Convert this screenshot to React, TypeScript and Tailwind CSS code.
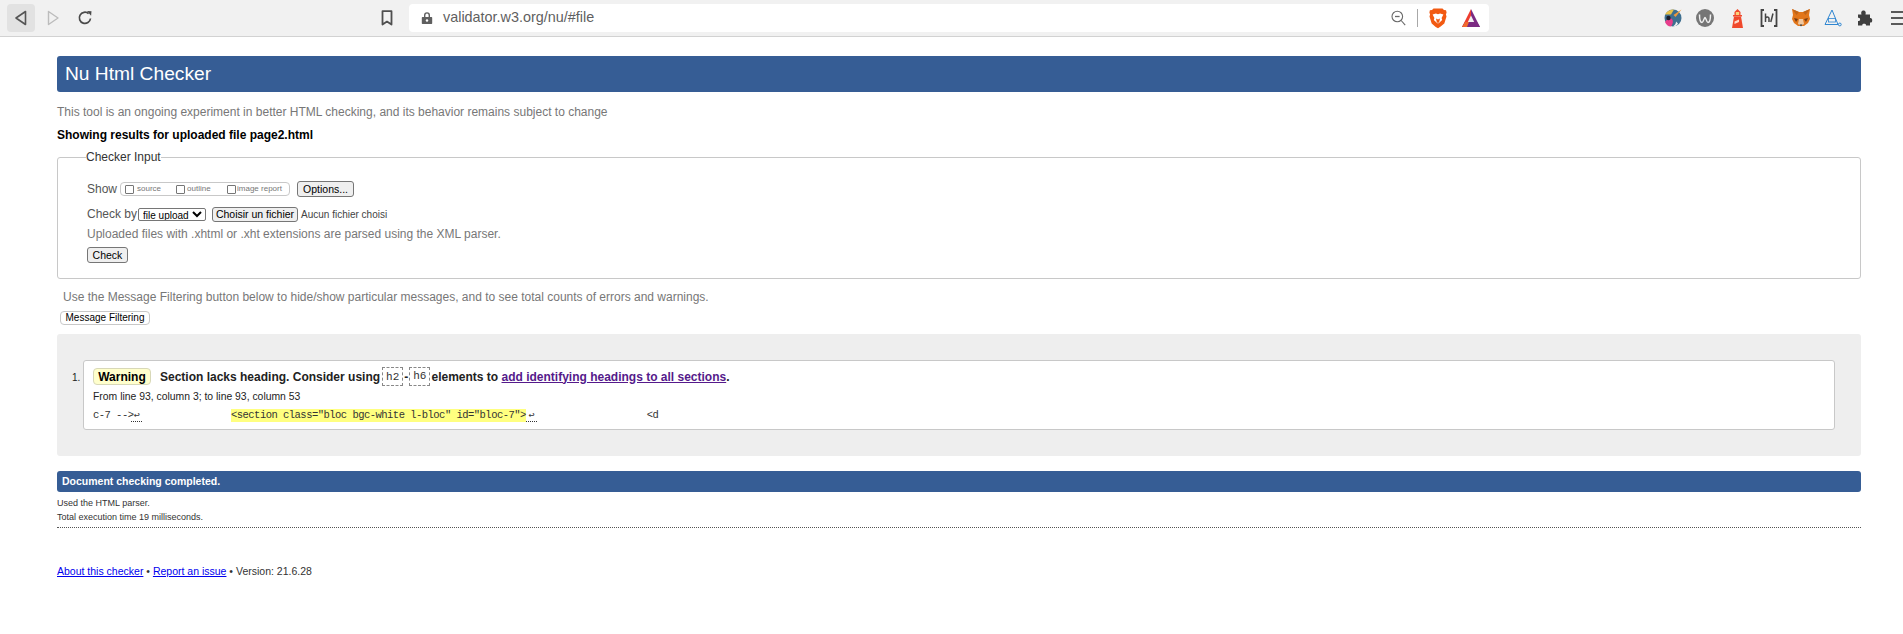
import React from 'react'

const sans = "font-['Liberation_Sans',Arial,sans-serif]"

function BackIcon({ color }: { color: string }) {
    return (
        <svg width="14" height="16" viewBox="0 0 14 16" fill="none" stroke={color} strokeWidth="1.6" strokeLinejoin="round">
            <path d="M11.5 1.5v13L2 8z" />
        </svg>
    )
}

function ForwardIcon() {
    return (
        <svg width="14" height="16" viewBox="0 0 14 16" fill="none" stroke="#bcbcbc" strokeWidth="1.4" strokeLinejoin="round">
            <path d="M2.5 1.5v13L12 8z" />
        </svg>
    )
}

function ReloadIcon() {
    return (
        <svg width="16" height="16" viewBox="0 0 16 16" fill="none" stroke="#4a4a4a" strokeWidth="1.7">
            <path d="M13.5 8.5A5.6 5.6 0 1 1 11.6 3.6" />
            <path d="M10 1l4.5.3-.4 4.5z" fill="#4a4a4a" stroke="none" />
        </svg>
    )
}

function BookmarkIcon() {
    return (
        <svg width="12" height="16" viewBox="0 0 12 16" fill="none" stroke="#4f4f4f" strokeWidth="1.8" strokeLinejoin="round">
            <path d="M1.5 1.2h9v13.4L6 11.6l-4.500 3z" />
        </svg>
    )
}

function LockIcon() {
    return (
        <svg width="12" height="14" viewBox="0 0 12 14" fill="#5f5f5f">
            <path d="M3 6V4.200a3 3 0 0 1 6 0V6H7.600V4.200a1.600 1.600 0 0 0-3.200 0V6z" />
            <path d="M1.500 6h9a.7.7 0 0 1 .7.7v5.600a.7.7 0 0 1-.7.7h-9a.7.7 0 0 1-.7-.7V6.700a.7.7 0 0 1 .7-.7z" />
            <circle cx="6" cy="9.500" r="1.200" fill="#fff" />
        </svg>
    )
}

function ZoomOutIcon() {
    return (
        <svg width="15" height="16" viewBox="0 0 15 16" fill="none" stroke="#6a6a6a" strokeWidth="1.1">
            <circle cx="6.300" cy="6.500" r="5.300" />
            <path d="M10.200 10.500l4 4.600" />
            <path d="M4 6.500h4.600" strokeWidth="1.300" />
        </svg>
    )
}

function BraveIcon() {
    return (
        <svg width="18" height="21" viewBox="0 0 18 21">
            <path d="M4.500.5h9L15 2l2 .2.6 2.200-.7 2 .6 2-2.200 7-4 3.400L9 20.300l-2.300-1.400-4-3.400-2.200-7 .6-2-.7-2L.9 2.200 3 2z" fill="#f25a12" />
            <path d="M3.600 6.500l3.300-.9 2.100.6 2.100-.6 3.300.9-1.800 3.500.6 2-3.500 3.300H8.300l-3.500-3.300.6-2z" fill="#fff" />
            <path d="M7 10.500l2 1 2-1-.8 3.700-1.200.8-1.200-.8z" fill="#f25a12" />
        </svg>
    )
}

function BatIcon() {
    return (
        <svg width="18" height="18" viewBox="0 0 18 18">
            <path d="M9 0L0 18h5L9 9.500 9 0z" fill="#ee3d2f" />
            <path d="M9 0l9 18h-4.500L9 9.500z" fill="#7b2a82" />
            <path d="M0 18l3-5h12l3 5z" fill="#7b2a82" />
            <path d="M3 13h4l-2 5H0z" fill="#f26a2e" />
            <path d="M9 6.500l3.200 6.500H5.800z" fill="#f1f1f1" />
        </svg>
    )
}

function ColorWheelIcon() {
    return (
        <svg width="18" height="18" viewBox="0 0 18 18">
            <circle cx="9" cy="9" r="8.500" fill="#3f6f8f" />
            <path d="M1 5.500C3 2 6 .5 10 .5L7 5.500z" fill="#e9c24a" />
            <path d="M17.500 .5l-6 7.500-2-2z" fill="#f09a3a" />
            <path d="M1 13c2-3 5-5 7-3 1.500 1.500 1 5-1 7.500C4 17.500 2 15.500 1 13z" fill="#e83e8c" />
            <circle cx="4.500" cy="9" r="2.200" fill="#1d1d2b" />
            <path d="M9 17.500c2-1.500 3-3 3-5l2 2c-1 2-3 3-5 3z" fill="#f2f2f2" />
        </svg>
    )
}

function WIcon() {
    return (
        <svg width="18" height="18" viewBox="0 0 18 18">
            <circle cx="9" cy="9" r="9" fill="#767676" />
            <path d="M3.500 5.500c0 5 1 8 2.500 8s2-5 3-5 1.500 5 3 5 2.500-3 2.500-8" fill="none" stroke="#f1f1f1" strokeWidth="1.500" />
        </svg>
    )
}

function LighthouseIcon() {
    return (
        <svg width="13" height="19" viewBox="0 0 13 19">
            <path d="M6.500 0l3 3v3h-6V3z" fill="#f0492c" />
            <rect x="4.800" y="3" width="3.400" height="3" fill="#fbd27a" />
            <rect x="2" y="6" width="9" height="1.500" fill="#f0492c" />
            <path d="M3 7.500h7l2 11.500H1z" fill="#f0492c" />
            <path d="M3.500 12.500l4.500-2v2.500l-4.500 2z" fill="#ffd9c9" />
        </svg>
    )
}

function HnIcon() {
    return (
        <svg width="18" height="18" viewBox="0 0 18 18" fill="none" stroke="#444" strokeWidth="1.500">
            <path d="M4 1H1.500v16H4M14 1h2.500v16H14" strokeWidth="1.800" />
            <path d="M5.500 4.500v8.500M5.500 9c1-1.500 3.500-1.500 3.500.5V13" />
            <path d="M13 4.500L10.800 13" />
        </svg>
    )
}

function FoxIcon() {
    return (
        <svg width="18" height="18" viewBox="0 0 18 18">
            <path d="M0 0l7 3h4l7-3-1 6 1 4-2 4-4 3H6l-4-3-2-4 1-4z" fill="#e2761b" />
            <path d="M2 9l4 1-2 3zM16 9l-4 1 2 3z" fill="#763d16" />
            <path d="M7 10h4l1 5-3 2-3-2z" fill="#f0c8a0" />
            <path d="M7.500 15.500h3L9 17.500z" fill="#2f2f2f" />
            <path d="M0 0l7 3-2.500 3zM18 0l-7 3 2.500 3z" fill="#c0651a" />
        </svg>
    )
}

function TriangleIcon() {
    return (
        <svg width="18" height="18" viewBox="0 0 18 18" fill="none" stroke="#2f86d1" strokeWidth="1">
            <path d="M8 1L1 15.500h13z" />
            <circle cx="15.800" cy="15.500" r="1.400" />
            <rect x="4.500" y="9.500" width="7" height="3.500" strokeWidth=".8" />
        </svg>
    )
}

function PuzzleIcon() {
    return (
        <svg width="16" height="16" viewBox="0 0 16 16" fill="#3f3f3f">
            <path d="M1 4.500h3.500c-.8-3 .5-4 2-4s2.800 1 2 4H13V8c3-.8 3 5.500 0 4.500V15.500H9c.8-2.500-4.500-2.500-3.700 0H1V11c2.800.8 2.800-4 0-3.200z" />
        </svg>
    )
}

function MenuIcon() {
    return (
        <svg width="12" height="14" viewBox="0 0 12 14" fill="#5a5a5a">
            <rect y="0" width="12" height="2" />
            <rect y="6" width="12" height="2" />
            <rect y="12" width="12" height="2" />
        </svg>
    )
}

function ExtSlot({ children }: { children: React.ReactNode }) {
    return <div className="flex h-5 w-8 items-center justify-center">{children}</div>
}

function Toolbar() {
    return (
        <div className="flex h-[37px] items-center border-b border-[#d2d2d2] bg-[#f1f1f1]">
            <div className="ml-[7px] flex h-7 w-7 items-center justify-center rounded bg-[#e2e2e2]"><BackIcon color="#555" /></div>
            <div className="ml-[11px] flex w-[14px] justify-center"><ForwardIcon /></div>
            <div className="ml-[17px] flex w-4 justify-center"><ReloadIcon /></div>
            <div className="ml-[288px] flex w-3 justify-center"><BookmarkIcon /></div>
            <div className="ml-4 flex h-7 w-[1080px] items-center rounded bg-white pl-3 pr-[9px]">
                <LockIcon />
                <span className="ml-[10px] text-[14.4px] text-[#5f5f5f]">validator.w3.org/nu/#file</span>
                <div className="ml-auto flex items-center">
                    <ZoomOutIcon />
                    <div className="ml-[11px] h-[18px] w-px bg-[#a8a8a8]" />
                    <div className="ml-[11px] flex"><BraveIcon /></div>
                    <div className="ml-[15px] flex"><BatIcon /></div>
                </div>
            </div>
            <div className="ml-auto flex -mr-[10px]">
                <ExtSlot><ColorWheelIcon /></ExtSlot>
                <ExtSlot><WIcon /></ExtSlot>
                <ExtSlot><LighthouseIcon /></ExtSlot>
                <ExtSlot><HnIcon /></ExtSlot>
                <ExtSlot><FoxIcon /></ExtSlot>
                <ExtSlot><TriangleIcon /></ExtSlot>
                <ExtSlot><PuzzleIcon /></ExtSlot>
                <ExtSlot><MenuIcon /></ExtSlot>
            </div>
        </div>
    )
}

const nativeButton = "rounded-[3px] border border-[#767676] bg-[#efefef] text-[10.5px] leading-none text-black"
const checkbox = "m-0 h-[9px] w-[9px] appearance-none rounded-[1px] border border-[#767676] bg-white"

function CheckerInput() {
    return (
        <fieldset className="mt-2 h-[129px] rounded-[3px] border border-[#c8c8c8] pl-[29px] pr-4">
            <legend className="-ml-px px-0 text-[12px] leading-[14px] text-[#333]">Checker Input</legend>

            <div className="mt-[17px] flex h-4 items-center">
                <span className="text-[12px] text-[#555]">Show</span>
                <div className="ml-[3px] flex h-[14px] w-[170px] items-center rounded-[4px] border border-[#c8c8c8] pl-[4px] text-[8px] text-[#777]">
                    <input type="checkbox" className={checkbox} />
                    <span className="ml-[3px] w-[39px]">source</span>
                    <input type="checkbox" className={checkbox} />
                    <span className="ml-[2px] w-[40px]">outline</span>
                    <input type="checkbox" className={checkbox} />
                    <span className="ml-[1px]">image report</span>
                </div>
                <button className={`ml-[7px] h-4 w-[57px] ${nativeButton}`}>Options...</button>
            </div>

            <div className="mt-[9px] flex h-4 items-center">
                <span className="text-[12px] text-[#555]">Check by</span>
                <select className="ml-px h-[13px] w-[68px] rounded-[2px] border border-[#767676] bg-white text-[10px] leading-none text-black">
                    <option>file upload</option>
                </select>
                <button className={`ml-[6px] h-[15px] w-[86px] ${nativeButton}`}>Choisir un fichier</button>
                <span className="ml-[3px] text-[10px] font-normal text-[#444]">Aucun fichier choisi</span>
            </div>

            <p className="mt-[4px] text-[12px] leading-4 text-[#777]">Uploaded files with .xhtml or .xht extensions are parsed using the XML parser.</p>

            <button className={`mt-[5px] block h-4 w-[41px] ${nativeButton}`}>Check</button>
        </fieldset>
    )
}

function Code({ children }: { children: React.ReactNode }) {
    return (
        <code className="mx-px inline-flex h-[19px] items-center border border-dashed border-[#888] px-[3px] font-['Liberation_Mono',monospace] text-[11px] font-normal text-[#333]">
            {children}
        </code>
    )
}

function ReturnMark() {
    return <span className="w-[11px] border-b border-dotted border-[#333] text-center text-[10px] leading-[11px]">↩</span>
}

function Message() {
    return (
        <div className="mt-[26px] h-[70px] rounded-[3px] border border-[#c8c8c8] bg-white pl-[9px]">
            <div className="mt-[6px] flex h-[19px] items-center text-[12px] font-bold text-[#222]">
                <span className="flex h-[17px] w-[58px] items-center justify-center rounded-[4px] border border-[#d8d8b8] bg-[#ffffcc] text-[12px] font-bold text-black">Warning</span>
                <span className="ml-[9px]">Section lacks heading. Consider using</span>
                <span className="ml-px"><Code>h2</Code></span>
                <span>-</span>
                <Code>h6</Code>
                <span>elements to&nbsp;</span>
                <a href="#" className="text-[#551a8b] underline">add identifying headings to all sections</a>
                <span>.</span>
            </div>
            <p className="mt-[5px] text-[10.4px] leading-3 text-[#222]">From line 93, column 3; to line 93, column 53</p>
            <div className="mt-[6px] flex h-[13px] items-center whitespace-pre font-['Liberation_Mono',monospace] text-[10.5px] tracking-[-0.52px] text-[#333]">
                <span className="w-[38px]">c-7 --&gt;</span>
                <ReturnMark />
                <span className="ml-[89px] bg-[#ffff80] leading-[13px]">&lt;section class="bloc bgc-white l-bloc" id="bloc-7"&gt;</span>
                <ReturnMark />
                <span className="ml-[110px]">&lt;d</span>
            </div>
        </div>
    )
}

export default function App() {
    return (
        <div className={`h-[634px] overflow-hidden bg-white ${sans}`}>
            <Toolbar />
            <div className="mx-[57px] mt-[19px] mr-[42px]">
                <h1 className="flex h-9 items-center rounded-[3px] bg-[#365d95] pl-2 text-[19.2px] font-normal text-white">Nu Html Checker</h1>
                <p className="mt-[13px] text-[12px] leading-[14px] text-[#777]">This tool is an ongoing experiment in better HTML checking, and its behavior remains subject to change</p>
                <p className="mt-[9px] text-[12px] font-bold leading-[14px] text-black">Showing results for uploaded file page2.html</p>

                <CheckerInput />

                <p className="mt-[11px] pl-[6px] text-[12px] leading-[14px] text-[#777]">Use the Message Filtering button below to hide/show particular messages, and to see total counts of errors and warnings.</p>
                <button className="ml-[3px] mt-[7px] block h-[14px] w-[90px] rounded-[4px] border border-[#c8c8c8] bg-white text-[10px] leading-none text-black">Message Filtering</button>

                <div className="mt-[9px] flex h-[122px] rounded-[3px] bg-[#eeeeee] pl-[15px] pr-[26px]">
                    <span className="mt-[38px] w-[11px] text-[10px] leading-[12px] text-[#222]">1.</span>
                    <div className="flex-1"><Message /></div>
                </div>

                <div className="mt-[15px] flex h-[21px] items-center rounded-[3px] bg-[#365d95] pl-[5px] text-[10.5px] font-bold text-white">Document checking completed.</div>
                <p className="mt-1 text-[9px] leading-[14px] text-[#333]">Used the HTML parser.</p>
                <p className="text-[9px] leading-[14px] text-[#333]">Total execution time 19 milliseconds.</p>
                <div className="mt-[3px] border-t border-dotted border-[#555]" />
                <p className="mt-[36px] text-[10.5px] leading-[14px] text-[#333]">
                    <a href="#" className="text-[#0000ee] underline">About this checker</a> • <a href="#" className="text-[#0000ee] underline">Report an issue</a> • Version: 21.6.28
                </p>
            </div>
        </div>
    )
}
